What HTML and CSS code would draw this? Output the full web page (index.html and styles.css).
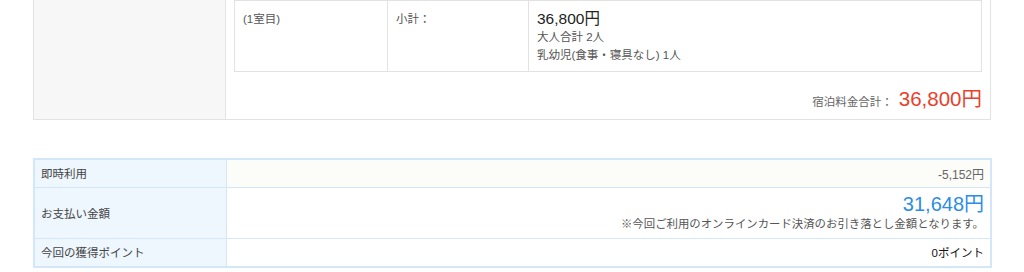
FILE: index.html
```html
<!DOCTYPE html>
<html lang="ja">
<head>
<meta charset="utf-8">
<link rel="stylesheet" href="styles.css">
</head>
<body>
<div class="page">
  <section class="plan">
    <div class="plan-side"></div>
    <div class="plan-main">
      <table class="room">
        <tr>
          <td class="c1">(1室目)</td>
          <td class="c2">小計：</td>
          <td class="c3">
            <div class="sub">36,800円</div>
            <div class="line">大人合計 2人</div>
            <div class="line">乳幼児(食事・寝具なし) 1人</div>
          </td>
        </tr>
      </table>
      <div class="total">
        <span class="total-label">宿泊料金合計：</span>
        <span class="total-num">36,800円</span>
      </div>
    </div>
  </section>

  <table class="pay">
    <tr class="r1">
      <th>即時利用</th>
      <td class="v1">-5,152円</td>
    </tr>
    <tr class="r2">
      <th>お支払い金額</th>
      <td>
        <div class="amount">31,648円</div>
        <div class="note">※今回ご利用のオンラインカード決済のお引き落とし金額となります。</div>
      </td>
    </tr>
    <tr class="r3">
      <th>今回の獲得ポイント</th>
      <td class="pts">0ポイント</td>
    </tr>
  </table>
</div>
</body>
</html>
```

FILE: styles.css
```css
* { box-sizing: border-box; }
html, body { margin: 0; padding: 0; background: #fff; }
body {
  font-family: "Liberation Sans", "Noto Sans CJK JP", sans-serif;
  color: #333;
  font-size: 11.5px;
}
.page {
  padding: 0 32px 0 33px;
  margin-top: -9px;
}
.plan {
  display: flex;
  width: 958px;
  border: 1px solid #e2e2e2;
}
.plan-side {
  width: 192px;
  background: #f7f7f7;
  border-right: 1px solid #e4e4e4;
}
.plan-main {
  flex: 1;
  padding: 8px 8px 0 8px;
}
.room {
  width: 748px;
  border-collapse: collapse;
  border: 1px solid #e2e2e2;
}
.room td {
  border-left: 1px solid #e2e2e2;
  vertical-align: top;
  padding: 9px 8px 7px 8px;
  line-height: 18px;
  font-size: 11.5px;
  color: #555;
}
.room .c1 { width: 153px; border-left: none; }
.room .c2 { width: 141px; }
.room .sub { font-size: 15.5px; color: #222; line-height: 18px; }
.room .line { color: #555; }
.total {
  display: flex;
  justify-content: flex-end;
  align-items: baseline;
  gap: 6px;
  padding: 15px 0 8px 0;
}
.total-label { font-size: 11.5px; color: #666; }
.total-num { font-size: 20.5px; color: #e8412c; line-height: 24px; }

.pay {
  margin-top: 38px;
  width: 959px;
  border-collapse: collapse;
  border: 2px solid #d4e7f8;
}
.pay th, .pay td {
  border: 1px solid #d4e7f8;
  font-size: 11.5px;
  font-weight: normal;
}
.pay th {
  width: 192px;
  background: #eef6fe;
  text-align: left;
  padding: 0 6px;
  color: #444;
}
.pay td {
  text-align: right;
  padding: 0 6px;
  background: #fff;
}
.pay .r1 { height: 28px; }
.pay .r2 { height: 51px; }
.pay .r3 { height: 29px; }
.pay .v1 { background: #fcfcf8; color: #666; font-size: 12px; }
.pay .amount { font-size: 20px; color: #2d8de3; line-height: 22px; }
.pay .note { color: #555; line-height: 18px; font-size: 11.4px; }
.pay .pts { color: #111; }
```
